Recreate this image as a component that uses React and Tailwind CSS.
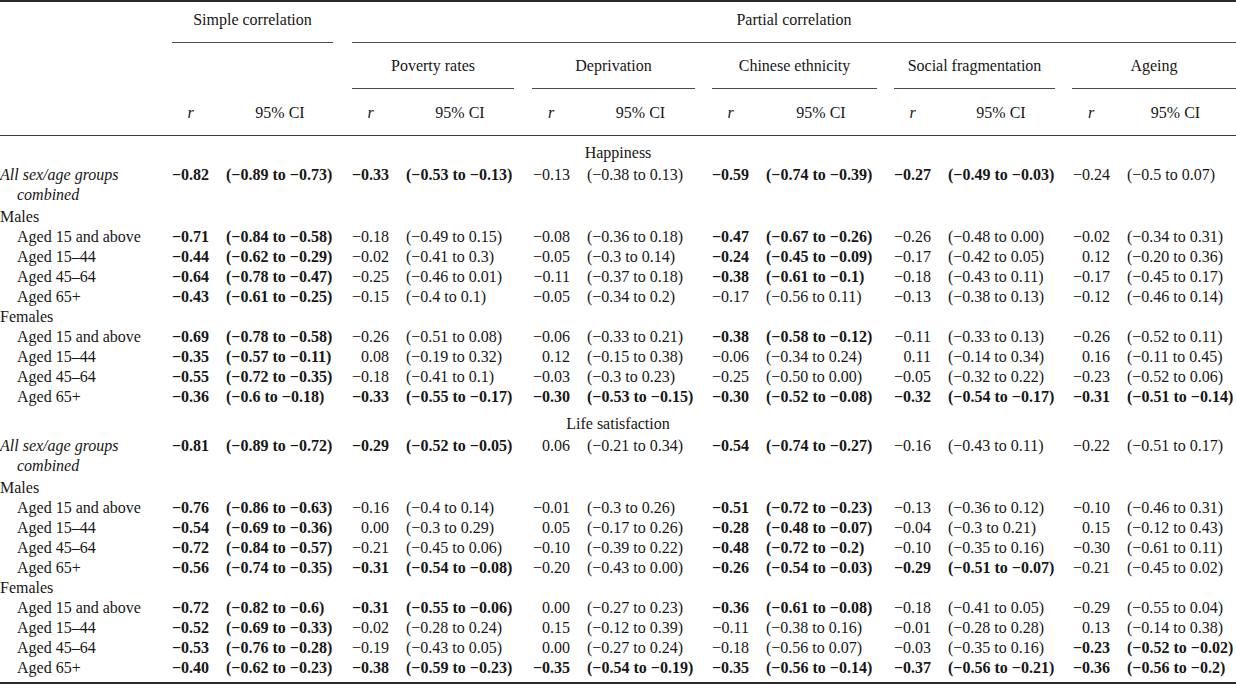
import React from "react";

const COLS =
  "grid grid-cols-[172px_54px_126px_54px_126px_55px_125px_54px_128px_54px_124px_55px_109px]";

const m = (s) => s.replace(/-/g, "\u2212");

const happiness = [
  { label: "All sex/age groups", label2: "combined", italic: true, v: [
    ["-0.82", "-0.89 to -0.73", 1], ["-0.33", "-0.53 to -0.13", 1], ["-0.13", "-0.38 to 0.13", 0],
    ["-0.59", "-0.74 to -0.39", 1], ["-0.27", "-0.49 to -0.03", 1], ["-0.24", "-0.5 to 0.07", 0]] },
  { label: "Males" },
  { label: "Aged 15 and above", indent: true, v: [
    ["-0.71", "-0.84 to -0.58", 1], ["-0.18", "-0.49 to 0.15", 0], ["-0.08", "-0.36 to 0.18", 0],
    ["-0.47", "-0.67 to -0.26", 1], ["-0.26", "-0.48 to 0.00", 0], ["-0.02", "-0.34 to 0.31", 0]] },
  { label: "Aged 15\u201344", indent: true, v: [
    ["-0.44", "-0.62 to -0.29", 1], ["-0.02", "-0.41 to 0.3", 0], ["-0.05", "-0.3 to 0.14", 0],
    ["-0.24", "-0.45 to -0.09", 1], ["-0.17", "-0.42 to 0.05", 0], ["0.12", "-0.20 to 0.36", 0]] },
  { label: "Aged 45\u201364", indent: true, v: [
    ["-0.64", "-0.78 to -0.47", 1], ["-0.25", "-0.46 to 0.01", 0], ["-0.11", "-0.37 to 0.18", 0],
    ["-0.38", "-0.61 to -0.1", 1], ["-0.18", "-0.43 to 0.11", 0], ["-0.17", "-0.45 to 0.17", 0]] },
  { label: "Aged 65+", indent: true, v: [
    ["-0.43", "-0.61 to -0.25", 1], ["-0.15", "-0.4 to 0.1", 0], ["-0.05", "-0.34 to 0.2", 0],
    ["-0.17", "-0.56 to 0.11", 0], ["-0.13", "-0.38 to 0.13", 0], ["-0.12", "-0.46 to 0.14", 0]] },
  { label: "Females" },
  { label: "Aged 15 and above", indent: true, v: [
    ["-0.69", "-0.78 to -0.58", 1], ["-0.26", "-0.51 to 0.08", 0], ["-0.06", "-0.33 to 0.21", 0],
    ["-0.38", "-0.58 to -0.12", 1], ["-0.11", "-0.33 to 0.13", 0], ["-0.26", "-0.52 to 0.11", 0]] },
  { label: "Aged 15\u201344", indent: true, v: [
    ["-0.35", "-0.57 to -0.11", 1], ["0.08", "-0.19 to 0.32", 0], ["0.12", "-0.15 to 0.38", 0],
    ["-0.06", "-0.34 to 0.24", 0], ["0.11", "-0.14 to 0.34", 0], ["0.16", "-0.11 to 0.45", 0]] },
  { label: "Aged 45\u201364", indent: true, v: [
    ["-0.55", "-0.72 to -0.35", 1], ["-0.18", "-0.41 to 0.1", 0], ["-0.03", "-0.3 to 0.23", 0],
    ["-0.25", "-0.50 to 0.00", 0], ["-0.05", "-0.32 to 0.22", 0], ["-0.23", "-0.52 to 0.06", 0]] },
  { label: "Aged 65+", indent: true, v: [
    ["-0.36", "-0.6 to -0.18", 1], ["-0.33", "-0.55 to -0.17", 1], ["-0.30", "-0.53 to -0.15", 1],
    ["-0.30", "-0.52 to -0.08", 1], ["-0.32", "-0.54 to -0.17", 1], ["-0.31", "-0.51 to -0.14", 1]] },
];

const life = [
  { label: "All sex/age groups", label2: "combined", italic: true, v: [
    ["-0.81", "-0.89 to -0.72", 1], ["-0.29", "-0.52 to -0.05", 1], ["0.06", "-0.21 to 0.34", 0],
    ["-0.54", "-0.74 to -0.27", 1], ["-0.16", "-0.43 to 0.11", 0], ["-0.22", "-0.51 to 0.17", 0]] },
  { label: "Males" },
  { label: "Aged 15 and above", indent: true, v: [
    ["-0.76", "-0.86 to -0.63", 1], ["-0.16", "-0.4 to 0.14", 0], ["-0.01", "-0.3 to 0.26", 0],
    ["-0.51", "-0.72 to -0.23", 1], ["-0.13", "-0.36 to 0.12", 0], ["-0.10", "-0.46 to 0.31", 0]] },
  { label: "Aged 15\u201344", indent: true, v: [
    ["-0.54", "-0.69 to -0.36", 1], ["0.00", "-0.3 to 0.29", 0], ["0.05", "-0.17 to 0.26", 0],
    ["-0.28", "-0.48 to -0.07", 1], ["-0.04", "-0.3 to 0.21", 0], ["0.15", "-0.12 to 0.43", 0]] },
  { label: "Aged 45\u201364", indent: true, v: [
    ["-0.72", "-0.84 to -0.57", 1], ["-0.21", "-0.45 to 0.06", 0], ["-0.10", "-0.39 to 0.22", 0],
    ["-0.48", "-0.72 to -0.2", 1], ["-0.10", "-0.35 to 0.16", 0], ["-0.30", "-0.61 to 0.11", 0]] },
  { label: "Aged 65+", indent: true, v: [
    ["-0.56", "-0.74 to -0.35", 1], ["-0.31", "-0.54 to -0.08", 1], ["-0.20", "-0.43 to 0.00", 0],
    ["-0.26", "-0.54 to -0.03", 1], ["-0.29", "-0.51 to -0.07", 1], ["-0.21", "-0.45 to 0.02", 0]] },
  { label: "Females" },
  { label: "Aged 15 and above", indent: true, v: [
    ["-0.72", "-0.82 to -0.6", 1], ["-0.31", "-0.55 to -0.06", 1], ["0.00", "-0.27 to 0.23", 0],
    ["-0.36", "-0.61 to -0.08", 1], ["-0.18", "-0.41 to 0.05", 0], ["-0.29", "-0.55 to 0.04", 0]] },
  { label: "Aged 15\u201344", indent: true, v: [
    ["-0.52", "-0.69 to -0.33", 1], ["-0.02", "-0.28 to 0.24", 0], ["0.15", "-0.12 to 0.39", 0],
    ["-0.11", "-0.38 to 0.16", 0], ["-0.01", "-0.28 to 0.28", 0], ["0.13", "-0.14 to 0.38", 0]] },
  { label: "Aged 45\u201364", indent: true, v: [
    ["-0.53", "-0.76 to -0.28", 1], ["-0.19", "-0.43 to 0.05", 0], ["0.00", "-0.27 to 0.24", 0],
    ["-0.18", "-0.56 to 0.07", 0], ["-0.03", "-0.35 to 0.16", 0], ["-0.23", "-0.52 to -0.02", 1]] },
  { label: "Aged 65+", indent: true, v: [
    ["-0.40", "-0.62 to -0.23", 1], ["-0.38", "-0.59 to -0.23", 1], ["-0.35", "-0.54 to -0.19", 1],
    ["-0.35", "-0.56 to -0.14", 1], ["-0.37", "-0.56 to -0.21", 1], ["-0.36", "-0.56 to -0.2", 1]] },
];

function Row({ row }) {
  const padTop = row.label2 || row.label === "Males" ? "pt-[2px]" : "";
  return (
    <div className={`${COLS} ${padTop}`}>
      <div className={row.indent ? "pl-[17px]" : ""}>
        <div className={row.italic ? "italic" : ""}>{row.label}</div>
        {row.label2 && <div className="italic pl-[17px]">{row.label2}</div>}
      </div>
      {row.v
        ? row.v.map(([r, ci, b], i) => (
            <React.Fragment key={i}>
              <div className={`text-right pr-[17px] whitespace-nowrap ${b ? "font-bold" : ""}`}>{m(r)}</div>
              <div className={`whitespace-nowrap ${b ? "font-bold" : ""}`}>({m(ci)})</div>
            </React.Fragment>
          ))
        : null}
    </div>
  );
}

const groups = [
  { name: "Poverty rates", pr: "pr-[18px]" },
  { name: "Deprivation", pr: "pr-[17px]" },
  { name: "Chinese ethnicity", pr: "pr-[17px]" },
  { name: "Social fragmentation", pr: "pr-[17px]" },
  { name: "Ageing", pr: "pr-0" },
];

export default function App() {
  return (
    <div className="w-[1236px] h-[697px] bg-white text-[#161616] [font-family:'Liberation_Serif','Times_New_Roman',serif] text-[16px] leading-[20px]">
      <div className="border-t-2 border-[#2a2a2a]">
        {/* header row 1 */}
        <div className={COLS}>
          <div />
          <div className="col-span-2 pr-[19px]">
            <div className="pt-[8px] pb-[12px] text-center border-b border-[#4a4a4a]">Simple correlation</div>
          </div>
          <div className="col-span-10">
            <div className="pt-[8px] pb-[12px] text-center border-b border-[#4a4a4a]">Partial correlation</div>
          </div>
        </div>
        {/* header row 2 */}
        <div className={COLS}>
          <div />
          <div className="col-span-2" />
          {groups.map((g) => (
            <div key={g.name} className={`col-span-2 ${g.pr}`}>
              <div className="pt-[13px] pb-[12px] text-center border-b border-[#4a4a4a]">{g.name}</div>
            </div>
          ))}
        </div>
        {/* header row 3 */}
        <div className={`${COLS} pt-[14px] pb-[12px] border-b border-[#3a3a3a]`}>
          <div />
          {[0, 1, 2, 3, 4, 5].map((i) => (
            <React.Fragment key={i}>
              <div className="text-center pr-[17px] italic">r</div>
              <div className={`text-center ${i === 5 ? "pr-[12px]" : "pr-[18px]"}`}>95% CI</div>
            </React.Fragment>
          ))}
        </div>
        {/* body */}
        <div className="pb-[4px] border-b-2 border-[#2a2a2a]">
          <div className="pt-[7px] text-center">Happiness</div>
          {happiness.map((row, i) => (
            <Row key={"h" + i} row={row} />
          ))}
          <div className="pt-[7px] text-center">Life satisfaction</div>
          {life.map((row, i) => (
            <Row key={"l" + i} row={row} />
          ))}
        </div>
      </div>
    </div>
  );
}
